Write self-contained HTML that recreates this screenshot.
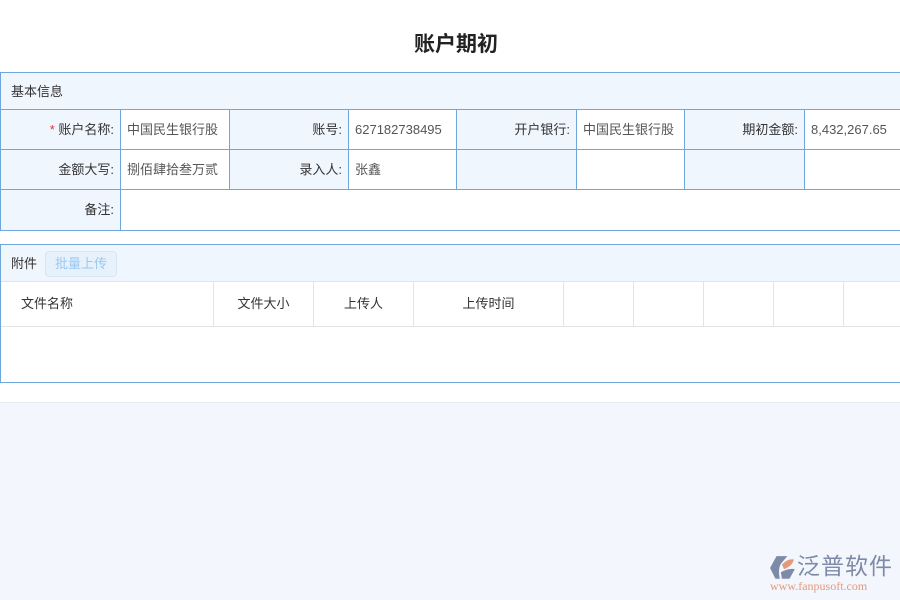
<!DOCTYPE html>
<html><head><meta charset="utf-8"><style>
*{box-sizing:border-box;margin:0;padding:0}
body{width:900px;height:600px;overflow:hidden;background:#f3f6fc;font-family:"Liberation Sans","Noto Sans CJK SC",sans-serif;font-size:13px;color:#333;position:relative}
.top{position:absolute;left:0;top:0;width:900px;height:403px;background:#fff;border-bottom:1px solid #e6eaf0}
.title{position:absolute;top:28px;left:0;width:912px;text-align:center;font-size:21px;font-weight:bold;color:#222}
.box{position:absolute;left:0;width:900px;border:1px solid #6fa6dc;border-right:none}
.hdr{background:#f0f6fe;height:37px;line-height:37px;padding-left:10px;border-bottom:1px solid #6fa6dc}
.c{position:absolute;height:40px;line-height:39px;border-right:1px solid #6fa6dc;border-bottom:1px solid #6fa6dc}
.l{background:#f0f6fe;text-align:right;padding-right:6px}
.v{background:#fff;padding-left:6px;color:#555}
.th{position:absolute;top:37px;height:45px;line-height:44px;border-right:1px solid #e4e4e4;border-bottom:1px solid #e4e4e4;text-align:center;color:#333}
</style></head><body>
<div class="top"></div>
<div class="title">账户期初</div>
<div class="box" style="top:72px;height:159px">
<div class="hdr">基本信息</div>
<div class="c l" style="left:0;top:37px;width:120px"><span style="color:#e33">* </span>账户名称:</div>
<div class="c v" style="left:120px;top:37px;width:109px">中国民生银行股</div>
<div class="c l" style="left:229px;top:37px;width:119px">账号:</div>
<div class="c v" style="left:348px;top:37px;width:108px">627182738495</div>
<div class="c l" style="left:456px;top:37px;width:120px">开户银行:</div>
<div class="c v" style="left:576px;top:37px;width:108px">中国民生银行股</div>
<div class="c l" style="left:684px;top:37px;width:120px">期初金额:</div>
<div class="c v" style="left:804px;top:37px;width:96px;border-right:none">8,432,267.65</div>
<div class="c l" style="left:0;top:77px;width:120px">金额大写:</div>
<div class="c v" style="left:120px;top:77px;width:109px">捌佰肆拾叁万贰</div>
<div class="c l" style="left:229px;top:77px;width:119px">录入人:</div>
<div class="c v" style="left:348px;top:77px;width:108px">张鑫</div>
<div class="c l" style="left:456px;top:77px;width:120px"></div>
<div class="c v" style="left:576px;top:77px;width:108px"></div>
<div class="c l" style="left:684px;top:77px;width:120px"></div>
<div class="c v" style="left:804px;top:77px;width:96px;border-right:none"></div>
<div class="c l" style="left:0;top:117px;width:120px;border-bottom:none">备注:</div>
<div class="c v" style="left:120px;top:117px;width:780px;border:none"></div>
</div>
<div class="box" style="top:244px;height:139px">
<div class="hdr" style="border-bottom:1px solid #e4e4e4">附件<span style="display:inline-block;margin-left:8px;height:26px;line-height:24px;padding:0 9px;border:1px solid #d6e6f7;border-radius:4px;background:#e6f1fc;color:#9cc8f0;vertical-align:middle;position:relative;top:-1px">批量上传</span></div>
<div class="th" style="left:0;width:213px;text-align:left;padding-left:20px">文件名称</div>
<div class="th" style="left:213px;width:100px">文件大小</div>
<div class="th" style="left:313px;width:100px">上传人</div>
<div class="th" style="left:413px;width:150px">上传时间</div>
<div class="th" style="left:563px;width:70px"></div>
<div class="th" style="left:633px;width:70px"></div>
<div class="th" style="left:703px;width:70px"></div>
<div class="th" style="left:773px;width:70px"></div>
<div class="th" style="left:843px;width:57px;border-right:none"></div>
</div>
<svg style="position:absolute;left:769px;top:555px" width="28" height="26" viewBox="0 0 26 24"><path d="M7 1H17L11 8Q8 13 10 22H6L1 12Z" fill="#7d8aa8"/><path d="M12 9Q17 3 23 4Q22 10 14 13Z" fill="#e39a7c"/><path d="M11 16Q18 12 24 13L19 22H12Z" fill="#7d8aa8"/></svg>
<div style="position:absolute;left:797px;top:552px;font-size:23px;color:#7d8aa8;letter-spacing:1px;line-height:28px">泛普软件</div>
<div style="position:absolute;left:770px;top:580px;font-size:12px;color:#e39a7c;font-family:'Liberation Serif',serif;line-height:12px">www.fanpusoft.com</div>
</body></html>
